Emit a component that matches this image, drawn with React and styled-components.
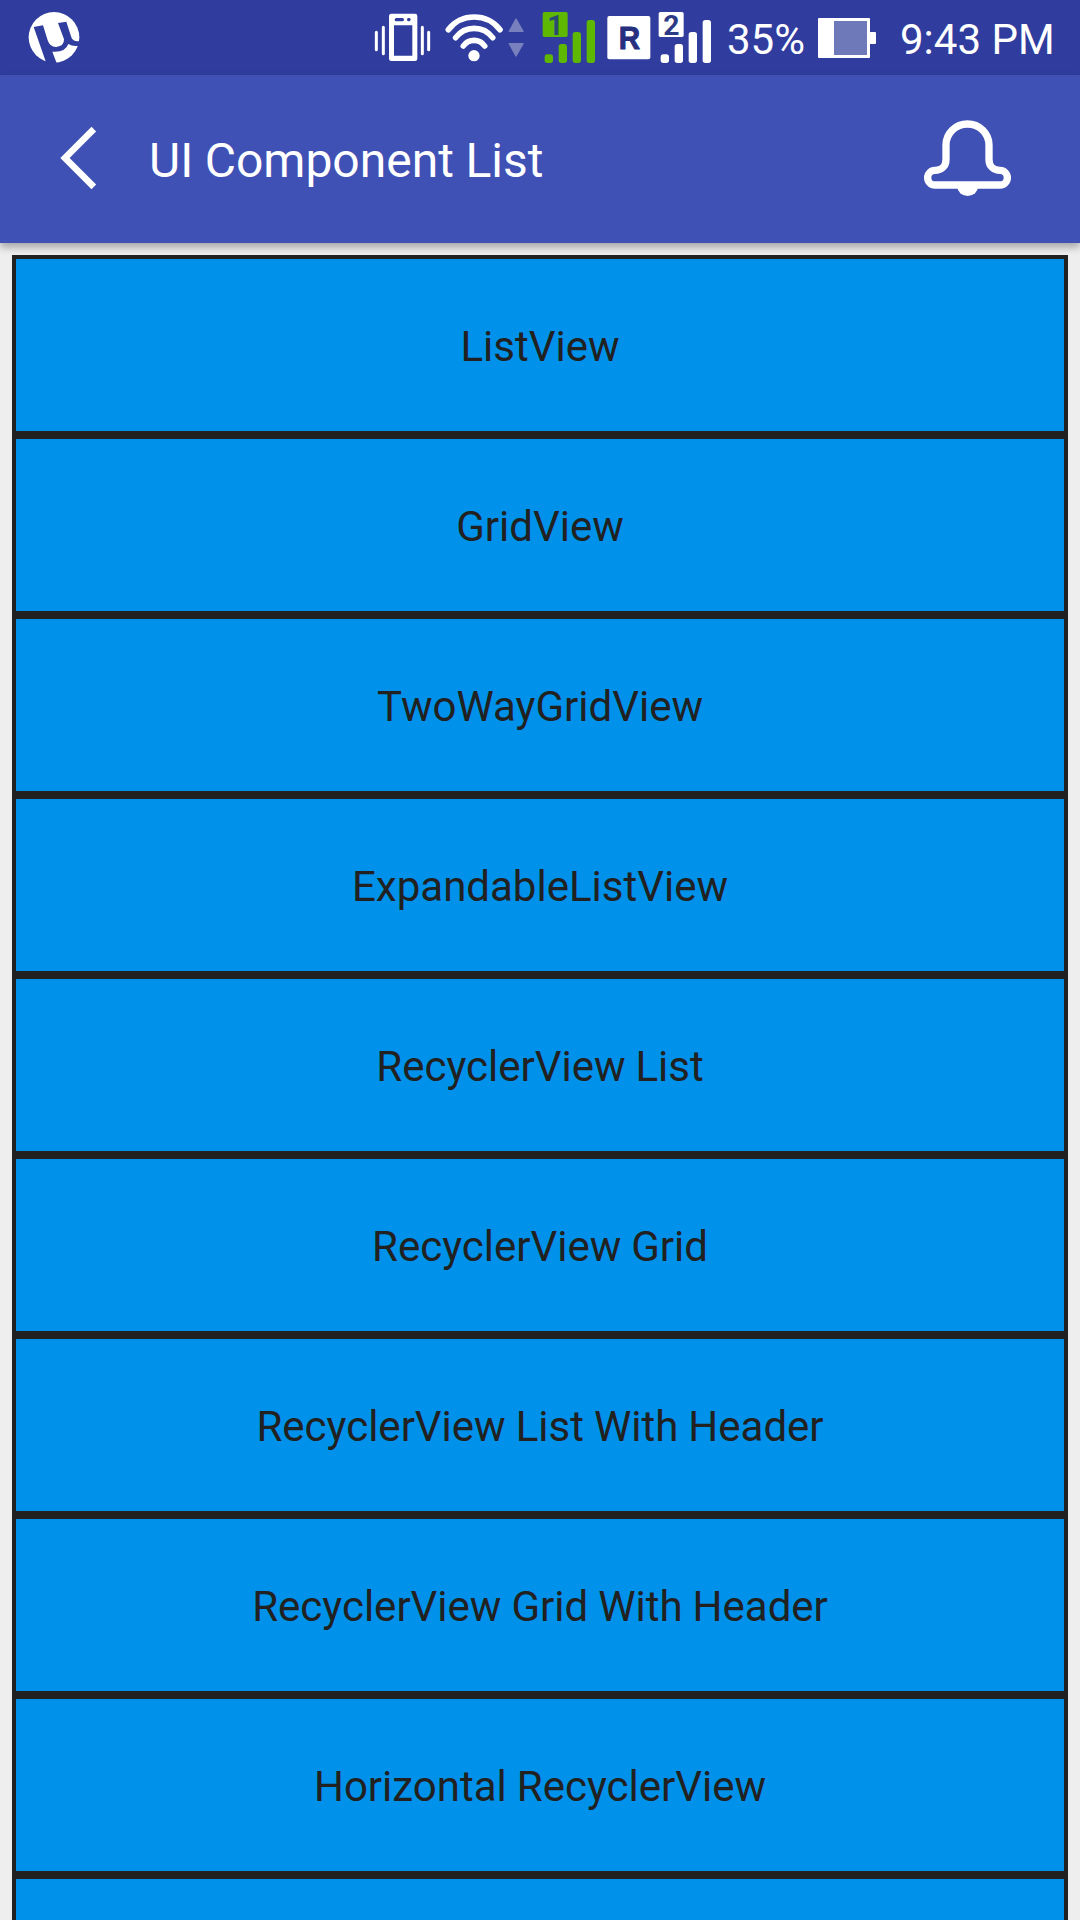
import React from "react";
import styled, { createGlobalStyle } from "styled-components";

const GlobalStyle = createGlobalStyle`
  html, body { margin: 0; padding: 0; background: #eeeeee; }
  body { font-family: Roboto, "Noto Sans", sans-serif; overflow: hidden; }
`;

const Screen = styled.div`
  display: flex;
  flex-direction: column;
  width: 1080px;
  height: 1920px;
  overflow: hidden;
  background: #eeeeee;
`;

const StatusBar = styled.header`
  display: flex;
  align-items: center;
  flex: none;
  height: 75px;
  padding: 0 23px 0 28px;
  box-sizing: border-box;
  background: #303d9f;
  color: #ffffff;
`;

const StatusIcon = styled.svg`
  display: block;
  flex: none;
  height: 75px;
  width: ${(p) => p.$width}px;
  margin-left: ${(p) => p.$gap || 0}px;
`;

const StatusText = styled.span`
  flex: none;
  width: ${(p) => p.$width}px;
  margin-left: ${(p) => p.$gap}px;
  padding-top: 4px;
  font-size: 42px;
  line-height: 49px;
  white-space: nowrap;
`;

const Toolbar = styled.nav`
  display: flex;
  align-items: center;
  flex: none;
  height: 168px;
  padding: 0 62px 0 54px;
  box-sizing: border-box;
  background: #3f51b5;
  box-shadow: 0 4px 8px rgba(0, 0, 0, 0.32);
`;

const IconButton = styled.button`
  display: flex;
  flex: none;
  padding: 0;
  border: 0;
  background: none;
`;

const Title = styled.h1`
  flex: 1;
  margin: 4px 0 0 47px;
  color: #ffffff;
  font-size: 48px;
  font-weight: 400;
  line-height: 56px;
  word-spacing: -0.4px;
`;

const List = styled.ul`
  display: flex;
  flex-direction: column;
  flex: none;
  margin: 12px 12px 0;
  padding: 0;
  list-style: none;
`;

const Row = styled.li`
  display: flex;
  align-items: center;
  justify-content: center;
  height: 180px;
  box-sizing: border-box;
  padding-top: 3px;
  border: 4px solid #212121;
  background: #0091ea;
  color: #212121;
  font-size: 42px;
  line-height: 49px;
  word-spacing: -0.4px;
`;

const TorrentIcon = () => (
  <StatusIcon $width={52} viewBox="84 0 156 225">
    <circle cx="162" cy="112" r="76" fill="#fff" />
    <path
      d="M101 81L129 76L143 121Q150 142 169 141Q193 138 192 118L174 69L199 65L214 112Q220 127 240 123V137Q218 141 205 132Q196 158 157 155L171 192L139 190Z"
      fill="#303d9f"
    />
  </StatusIcon>
);

const VibrateIcon = () => (
  <StatusIcon $width={58} $gap={294} viewBox="42 0 174 225">
    <path
      fill="#fff"
      fillRule="evenodd"
      d="M94 41H165Q172 41 172 48V176Q172 183 165 183H94Q87 183 87 176V48Q87 41 94 41ZM102 76V167H157V76ZM109 54Q104 54 104 59T109 64H127Q132 64 132 59T127 54ZM145 54Q141 54 141 59T146 64T152 59T147 54Z"
    />
    <path
      d="M49 97V149M70 82V161M187 82V161M206 97V149"
      stroke="#fff"
      strokeWidth="9"
      strokeLinecap="round"
    />
  </StatusIcon>
);

const WifiIcon = () => (
  <StatusIcon $width={58} $gap={13} viewBox="255 0 174 225">
    <g fill="none" stroke="#fff" strokeWidth="17" strokeLinecap="round">
      <path d="M265 89A98 98 0 0 1 420 89" />
      <path d="M287 113A69 69 0 0 1 398 113" />
      <path d="M310 138A39 39 0 0 1 374 138" />
    </g>
    <circle cx="342" cy="167" r="17" fill="#fff" />
  </StatusIcon>
);

const TrafficIcon = () => (
  <StatusIcon $width={16} $gap={5} viewBox="445 0 48 225">
    <path
      d="M469 57L490 94H449ZM449 131H490L469 168Z"
      fill="#7980be"
      stroke="#7980be"
      strokeWidth="4"
      strokeLinejoin="round"
    />
  </StatusIcon>
);

const SignalIcon = ({ sim, color, ink, gap }) => (
  <StatusIcon $width={54} $gap={gap} viewBox="37 0 162 225">
    <g fill={color}>
      <rect x="39" y="36" width="75" height="75" rx="5" />
      <rect x="45" y="163" width="25" height="26" rx="8" />
      <rect x="87" y="132" width="25" height="57" rx="8" />
      <rect x="129" y="96" width="25" height="93" rx="8" />
      <rect x="171" y="60" width="25" height="129" rx="8" />
    </g>
    <text
      x="77"
      y="104"
      textAnchor="middle"
      fontFamily='Roboto, sans-serif'
      fontWeight="700"
      fontSize="85"
      fill={ink}
    >
      {sim}
    </text>
  </StatusIcon>
);

const RoamingIcon = () => (
  <StatusIcon $width={44} $gap={11} viewBox="230 0 132 225">
    <rect x="231" y="48" width="129" height="130" rx="6" fill="#fff" />
    <text
      x="297"
      y="146"
      textAnchor="middle"
      fontFamily='"Liberation Sans", sans-serif'
      fontWeight="700"
      fontSize="96"
      textLength="64"
      lengthAdjust="spacingAndGlyphs"
      fill="#26307f"
      stroke="#26307f"
      strokeWidth="3"
      strokeLinejoin="round"
    >
      R
    </text>
  </StatusIcon>
);

const BatteryIcon = () => (
  <StatusIcon $width={58} $gap={13} viewBox="324 0 174 225">
    <rect x="324" y="54" width="156" height="120" rx="3" fill="#fff" />
    <rect x="372" y="63" width="99" height="102" fill="#6e79b9" />
    <rect x="479" y="96" width="19" height="36" rx="3" fill="#fff" />
  </StatusIcon>
);

const BackIcon = () => (
  <svg width="48" height="72" viewBox="54 123 48 72">
    <path
      d="M91.5 131.5L65 158L91.5 184.5"
      fill="none"
      stroke="#fff"
      strokeWidth="6.6"
      strokeLinecap="square"
    />
  </svg>
);

const BellIcon = () => (
  <svg width="96" height="84" viewBox="126 81 288 252">
    <path
      d="M198 165A64.5 63 0 0 1 327 165V209C327 231 344 241 360 241A22 22 0 0 1 360 285H165A22 22 0 0 1 165 241C181 241 198 231 198 209Z"
      fill="none"
      stroke="#fff"
      strokeWidth="22"
    />
    <path d="M232 290A31 28 0 0 0 294 290Z" fill="#fff" />
  </svg>
);

const ITEMS = [
  "ListView",
  "GridView",
  "TwoWayGridView",
  "ExpandableListView",
  "RecyclerView List",
  "RecyclerView Grid",
  "RecyclerView List With Header",
  "RecyclerView Grid With Header",
  "Horizontal RecyclerView",
  "",
];

export default function App() {
  return (
    <Screen>
      <GlobalStyle />
      <StatusBar>
        <TorrentIcon />
        <VibrateIcon />
        <WifiIcon />
        <TrafficIcon />
        <SignalIcon sim="1" color="#5eb700" ink="#2b4a70" gap={18} />
        <RoamingIcon />
        <SignalIcon sim="2" color="#ffffff" ink="#2c3a86" gap={7} />
        <StatusText $width={78} $gap={15}>35%</StatusText>
        <BatteryIcon />
        <StatusText $width={155} $gap={24}>9:43 PM</StatusText>
      </StatusBar>
      <Toolbar>
        <IconButton aria-label="Back"><BackIcon /></IconButton>
        <Title>UI Component List</Title>
        <IconButton aria-label="Notifications"><BellIcon /></IconButton>
      </Toolbar>
      <List>
        {ITEMS.map((label, i) => (
          <Row key={i}>{label}</Row>
        ))}
      </List>
    </Screen>
  );
}
